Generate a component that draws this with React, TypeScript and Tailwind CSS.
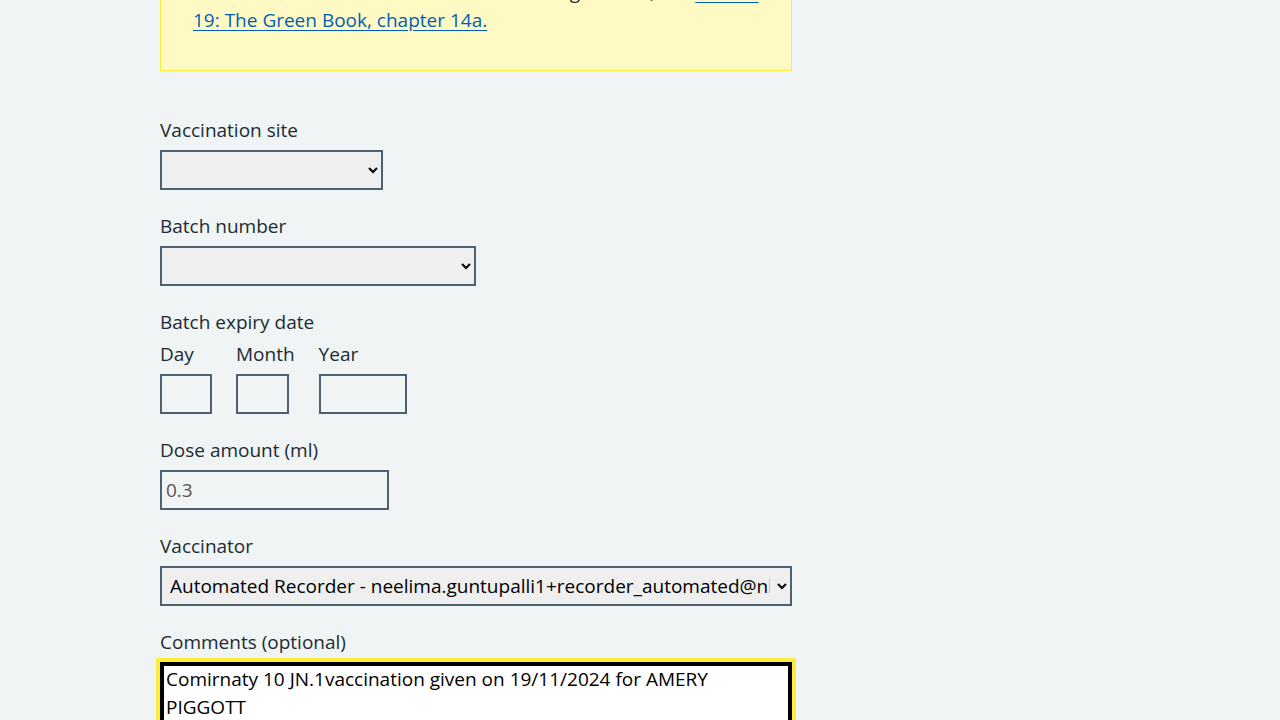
import type { ReactNode } from 'react'

const font = { fontFamily: '"Open Sans", "Noto Sans", Arial, sans-serif' }

function Label({ children, htmlFor }: { children: ReactNode; htmlFor?: string }) {
  return (
    <label htmlFor={htmlFor} className="mb-[6px] block h-7 text-[19px] leading-7 text-[#212b32]">
      {children}
    </label>
  )
}

function NativeSelect({ id, width, value }: { id: string; width: string; value?: string }) {
  return (
    <select
      id={id}
      defaultValue={value ?? ''}
      className={`${width} block h-10 border-2 border-[#4c6272] bg-[#efefef] px-1 text-[19px] text-black outline-none`}
    >
      <option value="">{''}</option>
      {value ? <option value={value}>{value}</option> : null}
    </select>
  )
}

function DateField({ label, width }: { label: string; width: string }) {
  return (
    <div className="flex flex-col">
      <label className="mb-[6px] block h-7 text-[19px] leading-7 text-[#212b32]">{label}</label>
      <input type="text" className={`${width} h-10 border-2 border-[#4c6272] bg-transparent px-1 text-[19px] outline-none`} />
    </div>
  )
}

export default function App() {
  const vaccinator = 'Automated Recorder - neelima.guntupalli1+recorder_automated@nhs.net'

  return (
    <div className="h-[720px] overflow-hidden bg-[#f0f4f5]" style={font}>
      <div className="ml-[160px] w-[632px] -mt-[55px]">
        <div className="mb-[45px] border border-[#ffeb3b] bg-[#fff9c4] px-8 pt-8 pb-[36px]">
          <p className="whitespace-nowrap text-[19px] leading-7 text-[#212b32]">
            For more information about all the clinical guidance, see{' '}
            <a href="#" className="text-[#005eb8] underline underline-offset-[3px]">
              COVID-
              <br />
              19: The Green Book, chapter 14a.
            </a>
          </p>
        </div>

        <form className="flex flex-col gap-[22px]">
          <div>
            <Label htmlFor="site">Vaccination site</Label>
            <NativeSelect id="site" width="w-[223px]" />
          </div>

          <div>
            <Label htmlFor="batch">Batch number</Label>
            <NativeSelect id="batch" width="w-[316px]" />
          </div>

          <fieldset>
            <legend className="mb-1 block h-7 text-[19px] leading-7 text-[#212b32]">Batch expiry date</legend>
            <div className="flex gap-6">
              <DateField label="Day" width="w-[52px]" />
              <DateField label="Month" width="w-[53px]" />
              <DateField label="Year" width="w-[88px]" />
            </div>
          </fieldset>

          <div>
            <Label htmlFor="dose">Dose amount (ml)</Label>
            <input
              id="dose"
              type="text"
              defaultValue="0.3"
              className="block h-10 w-[229px] border-2 border-[#4c6272] bg-transparent px-1 text-[19px] text-[#545454] outline-none"
            />
          </div>

          <div>
            <Label htmlFor="vaccinator">Vaccinator</Label>
            <NativeSelect id="vaccinator" width="w-[632px]" value={vaccinator} />
          </div>

          <div>
            <Label htmlFor="comments">Comments (optional)</Label>
            <textarea
              id="comments"
              defaultValue="Comirnaty 10 JN.1vaccination given on 19/11/2024 for AMERY PIGGOTT"
              className="block h-[140px] w-[632px] resize-none border-2 border-black bg-white px-1 pt-[1px] text-[19px] leading-7 text-black shadow-[inset_0_0_0_2px_#000] outline-4 outline-[#ffeb3b]"
            />
          </div>
        </form>
      </div>
    </div>
  )
}
